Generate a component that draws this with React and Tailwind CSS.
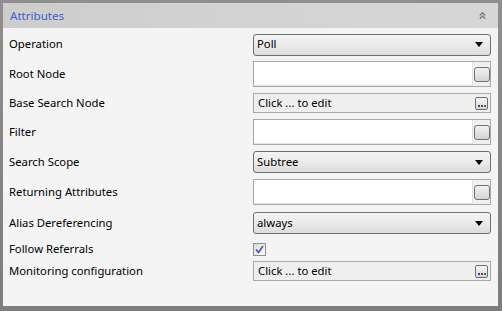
import { ChevronsUp } from 'lucide-react';

const font = { fontFamily: '"Noto Sans", "Open Sans", sans-serif' };

const Label = ({ children }) => (
  <div className="w-[250px] shrink-0 pl-[6px] text-[11.3px] text-black">{children}</div>
);

const Combo = ({ value }) => (
  <div className="flex h-[22px] w-[238px] items-center justify-between rounded-[3px] border border-[#707070] bg-gradient-to-b from-[#f3f3f3] via-[#ebebeb] to-[#dcdcdc] pl-[3px] pr-[7px] text-[11.3px] text-black">
    <span>{value}</span>
    <svg width="8" height="5" viewBox="0 0 8 5">
      <path d="M0 0 H8 L4 5 Z" fill="#000" />
    </svg>
  </div>
);

const SmallButton = () => (
  <div className="h-[15px] w-[16px] rounded-[3px] border border-[#707070] bg-gradient-to-b from-[#f2f2f2] to-[#d4d4d4]" />
);

const TextField = () => (
  <div className="flex h-[26px] w-[238px] items-center border border-[#a9a9a9] bg-[#f0f0f0]">
    <div className="h-full w-[219px] border-r border-b border-[#e2e2e2] bg-white" />
    <div className="flex flex-1 items-center justify-center">
      <SmallButton />
    </div>
  </div>
);

const EditBox = () => (
  <div className="flex h-[20px] w-[238px] items-center justify-between border border-[#a9a9a9] bg-[#efefef] pl-[4px] pr-[2px] text-[11.3px] text-black">
    <span>Click ... to edit</span>
    <div className="relative h-[13px] w-[13px] rounded-[2px] border border-[#707070] bg-gradient-to-b from-[#f6f6f6] to-[#d6d6d6]">
      <div className="absolute bottom-[2px] left-[2px] flex gap-[1px]">
        <span className="h-[2px] w-[2px] bg-[#2a3f9a]" />
        <span className="h-[2px] w-[2px] bg-[#9a2a3f]" />
        <span className="h-[2px] w-[2px] bg-[#2a7a3f]" />
      </div>
    </div>
  </div>
);

const Check = () => (
  <div className="flex h-[13px] w-[13px] items-center justify-center border border-[#8f8f8f] bg-gradient-to-br from-[#dcdcdc] to-[#fafafa]">
    <svg width="9" height="9" viewBox="0 0 9 9">
      <path d="M1 4.5 L3.5 7.5 L8 1" stroke="#3c55c0" strokeWidth="1.6" fill="none" />
    </svg>
  </div>
);

const rows = [
  { label: 'Operation', h: 'h-[29px]', control: <Combo value="Poll" /> },
  { label: 'Root Node', h: 'h-[30px]', control: <TextField /> },
  { label: 'Base Search Node', h: 'h-[28px]', control: <EditBox /> },
  { label: 'Filter', h: 'h-[30px]', control: <TextField /> },
  { label: 'Search Scope', h: 'h-[30px]', control: <Combo value="Subtree" /> },
  { label: 'Returning Attributes', h: 'h-[30px]', control: <TextField /> },
  { label: 'Alias Dereferencing', h: 'h-[32px]', control: <Combo value="always" /> },
  { label: 'Follow Referrals', h: 'h-[20px]', control: <Check /> },
  { label: 'Monitoring configuration', h: 'h-[24px]', control: <EditBox /> },
];

export default function App() {
  return (
    <div className="h-[311px] w-[502px] bg-gradient-to-b from-[#8f8f8f] to-[#7d7d7d] pt-[3px] pl-[3px] pr-[4px] pb-[5px]" style={font}>
      <div className="flex h-full flex-col bg-[#f4f4f4]">
        <div className="flex h-[25px] items-center justify-between bg-gradient-to-r from-[#cdcdcd] via-[#d3d3d3] to-[#d6d6d6] pl-[7px] pr-[10px]">
          <span className="text-[11.6px] text-[#3d5fcf]">Attributes</span>
          <ChevronsUp size={11} strokeWidth={3} color="#7a7a7a" />
        </div>
        <div className="flex flex-col pt-[2px]">
          {rows.map((r) => (
            <div key={r.label} className={`flex ${r.h} items-center`}>
              <Label>{r.label}</Label>
              {r.control}
            </div>
          ))}
        </div>
      </div>
    </div>
  );
}
